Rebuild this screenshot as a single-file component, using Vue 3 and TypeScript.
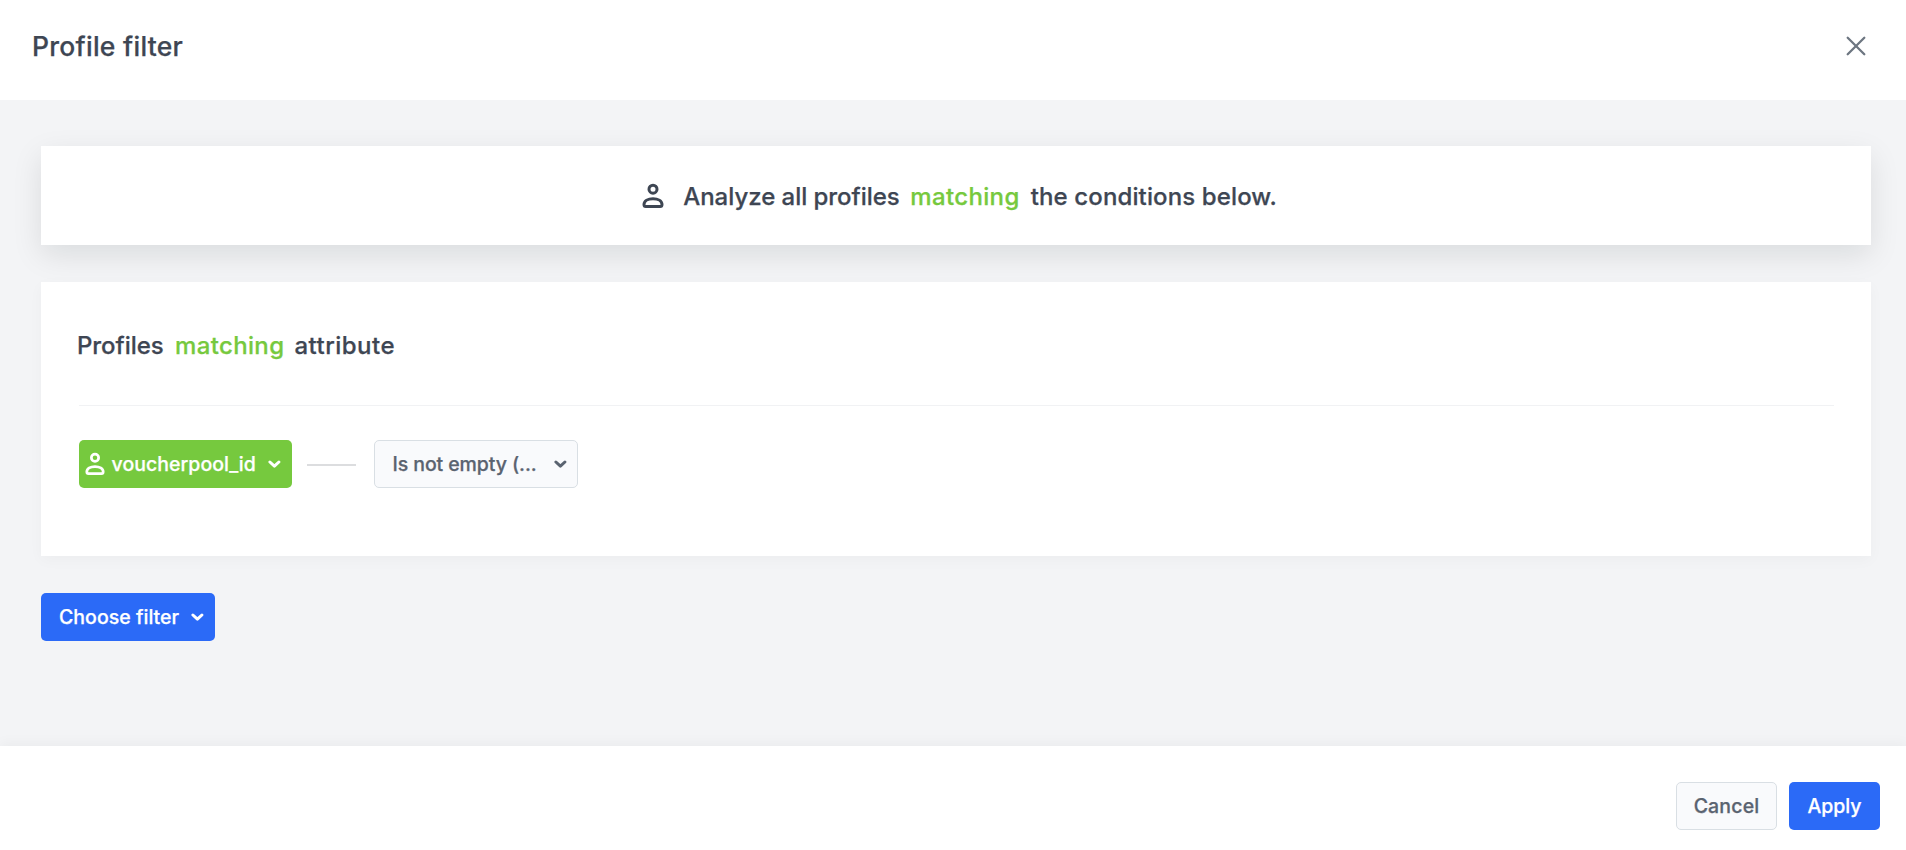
<script setup lang="ts">
const chevron = 'M1.9 2 L6.4 6.2 L10.9 2'
const personBody = 'M2 21.6 C2 17.8 6 15.8 11 15.8 S20 17.8 20 21.6 C20 22.9 19.4 23.6 18.2 23.6 H3.8 C2.6 23.6 2 22.9 2 21.6 Z'
</script>

<template>
  <div class="dialog">
    <header class="header">
      <h1 class="title">Profile filter</h1>
      <svg class="close" width="20" height="20" viewBox="0 0 20 20" aria-label="Close">
        <path d="M1.7 1.7 L18.3 18.3 M18.3 1.7 L1.7 18.3" />
      </svg>
    </header>

    <main class="content">
      <section class="summary">
        <svg class="person" width="22" height="26" viewBox="0 0 22 26">
          <circle cx="11" cy="6.2" r="4" />
          <path :d="personBody" />
        </svg>
        <span class="t-analyze">Analyze all profiles</span>
        <span class="match">matching</span>
        <span class="t-conditions">the conditions below.</span>
      </section>

      <section class="card">
        <h2 class="card-title">
          <span class="t-profiles">Profiles</span>
          <span class="match">matching</span>
          <span class="t-attribute">attribute</span>
        </h2>
        <div class="row">
          <button class="btn green">
            <svg class="person" width="20" height="24" viewBox="0 0 22 26">
              <circle cx="11" cy="6.2" r="4" />
              <path :d="personBody" />
            </svg>
            <span class="t-voucher">voucherpool_id</span>
            <svg class="chevron" width="13" height="8"><path :d="chevron" /></svg>
          </button>
          <span class="connector"></span>
          <button class="btn light select">
            <span class="t-operator">Is not empty (...</span>
            <svg class="chevron" width="13" height="8"><path :d="chevron" /></svg>
          </button>
        </div>
      </section>

      <button class="btn blue choose">
        <span class="t-choose">Choose filter</span>
        <svg class="chevron" width="13" height="8"><path :d="chevron" /></svg>
      </button>
    </main>

    <footer class="footer">
      <button class="btn light cancel">Cancel</button>
      <button class="btn blue apply">Apply</button>
    </footer>
  </div>
</template>

<style>
body {
  margin: 0;
  overflow: hidden;
}
</style>

<style scoped>
.dialog {
  display: flex;
  flex-direction: column;
  height: 850px;
  font-family: Inter, 'Liberation Sans', sans-serif;
  font-weight: 500;
  -webkit-text-stroke: 0.25px currentColor;
  color: #3e4653;
  background: #f3f4f6;
}
.dialog * {
  box-sizing: border-box;
}
.header {
  display: flex;
  flex: none;
  align-items: center;
  justify-content: space-between;
  height: 100px;
  padding: 0 40px 8px 32px;
  background: #fff;
}
.title {
  margin: 0;
  font-size: 26.5px;
  font-weight: inherit;
  letter-spacing: 0.27px;
}
.close path {
  fill: none;
  stroke: #6d7681;
  stroke-width: 2.3;
  stroke-linecap: round;
}
.content {
  flex: 1;
  padding: 46px 35px 0 41px;
}
.summary {
  position: relative;
  display: flex;
  align-items: center;
  justify-content: center;
  height: 99px;
  padding: 1px 0 0 7px;
  background: #fff;
  font-size: 24px;
  white-space: nowrap;
  box-shadow: 0 10px 28px rgba(10, 15, 20, 0.1);
}
.person {
  flex: none;
}
.person circle,
.person path {
  fill: none;
  stroke: currentColor;
  stroke-width: 3;
}
.summary .person {
  margin-right: 19px;
}
.t-analyze {
  width: 227px;
  letter-spacing: -0.04px;
}
.match {
  color: #76c93e;
  letter-spacing: 0.36px;
}
.summary .match {
  width: 120.5px;
}
.t-conditions {
  width: 246px;
  letter-spacing: 0.12px;
}
.card {
  position: relative;
  height: 274px;
  margin-top: 37px;
  padding: 0 37px 0 38px;
  background: #fff;
  box-shadow: 0 4px 14px rgba(20, 25, 35, 0.03);
}
.card-title {
  display: flex;
  align-items: center;
  height: 124px;
  margin: 0;
  padding-top: 4px;
  border-bottom: 1px solid #f1f2f4;
  font-size: 24px;
  font-weight: inherit;
}
.t-profiles {
  width: 98px;
  margin-left: -2px;
  letter-spacing: -0.05px;
}
.card-title .match {
  width: 119.5px;
}
.t-attribute {
  letter-spacing: 0.47px;
}
.row {
  display: flex;
  align-items: center;
  padding-top: 34px;
}
.btn {
  display: flex;
  align-items: center;
  height: 48px;
  margin: 0;
  padding: 0;
  border: 0;
  border-radius: 5px;
  color: #fff;
  font: inherit;
  font-size: 19.5px;
  text-align: left;
  white-space: nowrap;
}
.chevron {
  flex: none;
}
.chevron path {
  fill: none;
  stroke: currentColor;
  stroke-width: 3;
  stroke-linecap: round;
  stroke-linejoin: round;
}
.green {
  width: 213px;
  padding-left: 6px;
  background: #76c93e;
}
.t-voucher {
  width: 156.5px;
  margin-left: 6.5px;
  letter-spacing: 0.04px;
}
.connector {
  width: 49px;
  height: 2px;
  margin: 1px 18px 0 15px;
  background: #dcdddf;
}
.light {
  border: 1px solid #d9dfe4;
  background: #f9fafc;
  color: #5a6370;
}
.select {
  width: 204px;
  padding-left: 17.5px;
}
.t-operator {
  width: 161px;
  letter-spacing: -0.09px;
}
.blue {
  background: #2b6af7;
}
.choose {
  width: 174px;
  margin-top: 37px;
  padding-left: 18px;
}
.t-choose {
  width: 131.5px;
  letter-spacing: 0.03px;
}
.footer {
  display: flex;
  flex: none;
  gap: 12px;
  justify-content: flex-end;
  height: 104px;
  padding: 36px 26px 0 0;
  background: #fff;
  box-shadow: 0 -3px 12px rgba(20, 25, 35, 0.04);
}
.cancel,
.apply {
  justify-content: center;
}
.cancel {
  width: 101px;
  letter-spacing: 0.15px;
}
.apply {
  width: 91px;
  letter-spacing: 0;
}
</style>
